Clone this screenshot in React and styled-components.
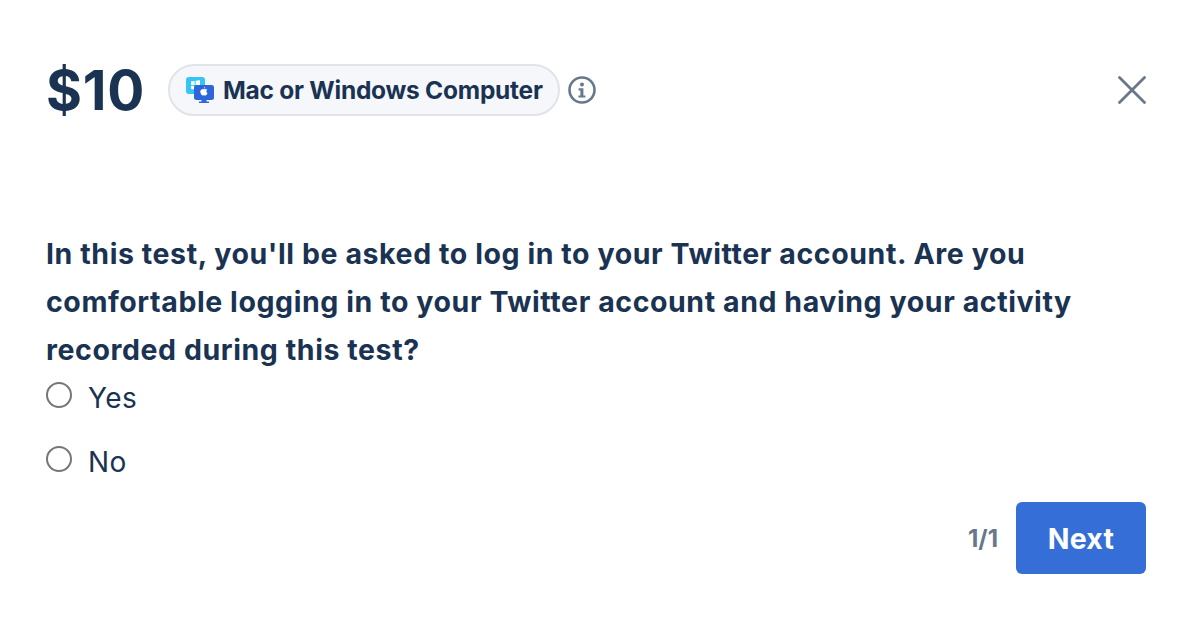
import styled, { createGlobalStyle } from 'styled-components';

const GlobalStyle = createGlobalStyle`
	html, body {
		margin: 0;
		padding: 0;
		background: #fff;
	}
	body {
		font-family: "Inter", "Liberation Sans", sans-serif;
		color: #1a3352;
	}
`;

const Modal = styled.div`
	box-sizing: border-box;
	width: 1192px;
	height: 620px;
	padding: 64px 46px 0;
	display: flex;
	flex-direction: column;
`;

const Header = styled.header`
	display: flex;
	align-items: center;
	height: 52px;
`;

const Price = styled.div`
	font-size: 55px;
	font-weight: 700;
	letter-spacing: 0.8px;
	width: 122px;
	line-height: 52px;
`;

const Pill = styled.div`
	box-sizing: border-box;
	width: 392px;
	height: 52px;
	display: flex;
	align-items: center;
	gap: 9px;
	padding-left: 16px;
	border: 2px solid #e0e4ea;
	border-radius: 26px;
	background: #f5f7fa;
	font-size: 24.5px;
	font-weight: 700;
	letter-spacing: -0.25px;
	white-space: nowrap;
`;

const InfoButton = styled.span`
	display: flex;
	margin-left: 8px;
`;

const CloseButton = styled.span`
	display: flex;
	margin-left: auto;
`;

const Question = styled.p`
	margin: 114px 0 0;
	font-size: 28.5px;
	line-height: 48px;
	font-weight: 700;
	letter-spacing: 0.58px;
`;

const Options = styled.div`
	display: flex;
	flex-direction: column;
	gap: 16px;
`;

const Option = styled.label`
	display: flex;
	align-items: center;
	gap: 16px;
	height: 48px;
	font-size: 28px;
	font-weight: 400;
	letter-spacing: 0.4px;
`;

const Radio = styled.span`
	box-sizing: border-box;
	width: 26px;
	height: 26px;
	border: 2px solid #767676;
	border-radius: 50%;
	margin-top: -6px;
`;

const Footer = styled.footer`
	display: flex;
	align-items: center;
	justify-content: flex-end;
	gap: 18px;
	margin-top: 16px;
`;

const Progress = styled.span`
	font-size: 24px;
	font-weight: 700;
	color: #68778c;
	letter-spacing: 0;
`;

const NextButton = styled.button`
	width: 130px;
	height: 72px;
	border: 0;
	border-radius: 6px;
	background: #366ed8;
	color: #fff;
	font-family: inherit;
	font-size: 28.5px;
	font-weight: 700;
	letter-spacing: 0.3px;
`;

const DeviceIcon = () => (
	<svg width="28" height="26" viewBox="0 0 28 26">
		<rect x="0" y="0" width="19" height="17" rx="3" fill="#35c5f5" />
		<path d="M5 4.5l3.6-.5v4H5zM9.6 3.8l4.4-.6V8H9.6zM5 9h3.6v3.6L5 12zM9.6 9H14v4.6l-4.4-.6z" fill="#fff" />
		<rect x="8" y="8" width="20" height="15" rx="2.5" fill="#2d66d8" />
		<path d="M15.5 23h5v1.4H23V26H13v-1.6h2.5z" fill="#2d66d8" />
		<path d="M19 10c-.7.2-1.2.8-1.2 1.6.7 0 1.3-.7 1.2-1.6zM16.5 12.2c-1.3 0-2.2 1-2.2 2.4 0 1.9 1.3 3.9 2.4 3.9.5 0 .7-.3 1.3-.3s.8.3 1.4.3c.9 0 1.7-1.3 2.1-2.5-1.4-.6-1.6-2.6-.2-3.3-.5-.5-1.2-.8-1.8-.8-.7 0-1.1.4-1.5.4s-.9-.4-1.5-.4z" fill="#fff" />
	</svg>
);

const InfoIcon = () => (
	<svg width="28" height="28" viewBox="0 0 28 28" fill="none">
		<circle cx="14" cy="14" r="12.5" stroke="#68778c" strokeWidth="2.6" />
		<circle cx="14" cy="8.6" r="2" fill="#68778c" />
		<path d="M10.6 12.2h4.8v7.2h2v2.2h-7v-2.2h2v-5h-1.8z" fill="#68778c" />
	</svg>
);

const CloseIcon = () => (
	<svg width="28" height="28" viewBox="0 0 28 28" fill="none">
		<path d="M1.5 1.5l25 25M26.5 1.5l-25 25" stroke="#68778c" strokeWidth="2.8" strokeLinecap="round" />
	</svg>
);

const App = () => {
	return (
		<Modal>
			<GlobalStyle />
			<Header>
				<Price>$10</Price>
				<Pill>
					<DeviceIcon />
					Mac or Windows Computer
				</Pill>
				<InfoButton><InfoIcon /></InfoButton>
				<CloseButton><CloseIcon /></CloseButton>
			</Header>
			<Question>
				In this test, you'll be asked to log in to your Twitter account. Are you<br />
				comfortable logging in to your Twitter account and having your activity<br />
				recorded during this test?
			</Question>
			<Options>
				<Option><Radio />Yes</Option>
				<Option><Radio />No</Option>
			</Options>
			<Footer>
				<Progress>1/1</Progress>
				<NextButton>Next</NextButton>
			</Footer>
		</Modal>
	);
};

export default App;
